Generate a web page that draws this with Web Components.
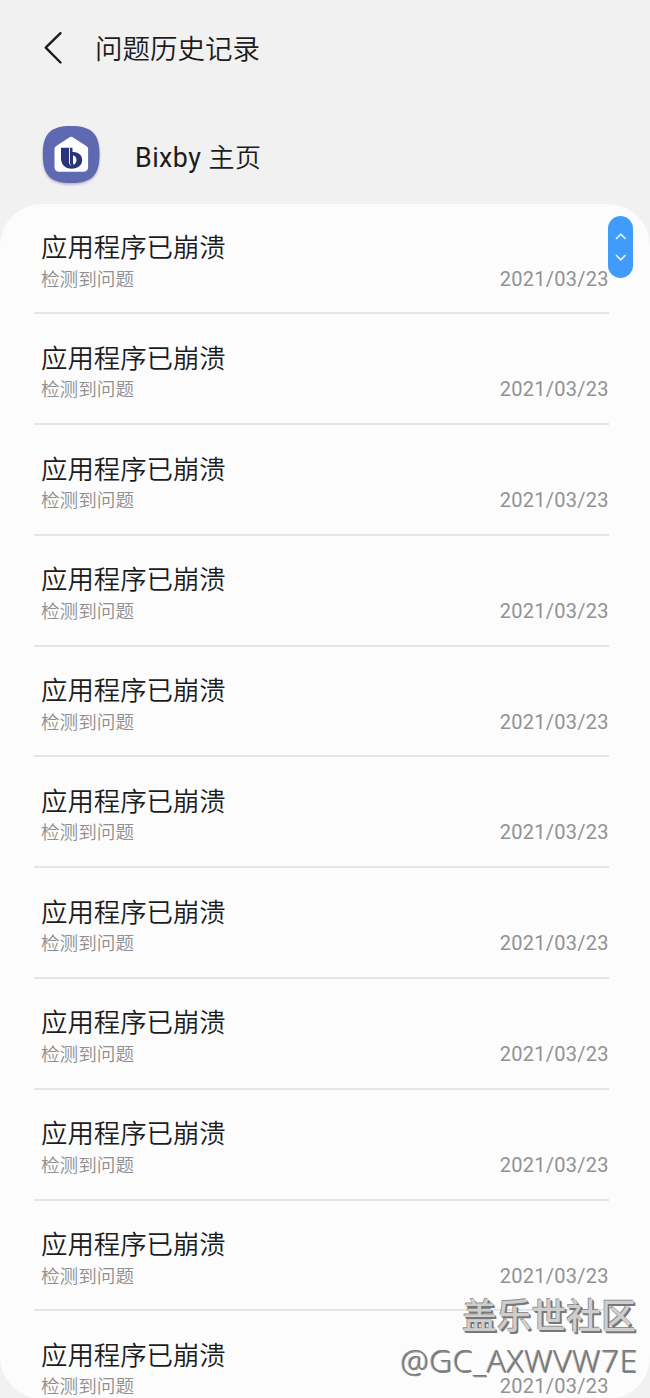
<!DOCTYPE html>
<html lang="zh-CN">
<head>
<meta charset="utf-8">
<title>问题历史记录</title>
<style>
html,body{margin:0;height:1398px;overflow:hidden;background:#f1f1f1}
body{font-family:"Noto Sans CJK SC",sans-serif;color:#1c1c1c}
</style>
</head>
<body>
<history-page></history-page>
<script>
const define = (name, html, setup) => customElements.define(name, class extends HTMLElement {
  constructor() {
    super();
    const t = document.createElement('template');
    t.innerHTML = html;
    this.attachShadow({mode: 'open'}).append(t.content.cloneNode(true));
    if (setup) setup(this.shadowRoot);
  }
});

define('page-header', `<style>
:host{display:flex;align-items:center;height:96px;padding-left:43px;box-sizing:border-box}
svg{width:20px;height:34px;flex:none;margin-right:32px}
h1{margin:0 0 2px;font-size:27.5px;line-height:40px;font-weight:350;white-space:nowrap}
</style>
<svg viewBox="0 0 20 34" fill="none" stroke="#1c1c1c" stroke-width="2.4" stroke-linecap="round" stroke-linejoin="round"><path d="M17.5 2.2 2.7 16.7l14.8 14.8"/></svg>
<h1><slot></slot></h1>`);

define('app-heading', `<style>
:host{display:flex;align-items:center;height:108px;padding:0 0 0 41px;box-sizing:border-box}
svg{width:62px;height:64px;flex:none;margin:12px 32px 0 0;align-self:center}
h2{margin:15px 0 0;font:400 26.8px/40px Roboto,"Noto Sans CJK SC",sans-serif;letter-spacing:.45px;white-space:nowrap}
.cjk{font-size:26px;font-weight:350}
</style>
<svg viewBox="0 0 62 64">
<defs><filter id="s" x="-10%" y="-10%" width="120%" height="125%"><feDropShadow dx="0" dy="1.5" stdDeviation="1" flood-color="#77799f" flood-opacity=".55"/></filter></defs>
<path filter="url(#s)" fill="#5f69b1" d="M30 2C9.500 2 1.800 9.500 1.800 30.500S9.500 59 30 59s28.500-7.500 28.500-28.500S50.500 2 30 2Z"/>
<path fill="#fff" d="M28.200 13.500a3.400 3.400 0 0 1 3.900 0l13.200 8.500c1.200.8 1.800 1.800 1.800 3.200v17.600q0 5-5 5H18.500q-5 0-5-5V25.200c0-1.400.6-2.400 1.800-3.200Z"/>
<path fill="#293578" d="M20 23.800H31.500V28C37.500 27.500 41.200 31.400 41.200 36c0 5-4.300 8.700-10.500 8.700C24 44.700 20 40.500 20 34.300Z"/>
<path fill="#fff" d="M28 23.500h.9v14.500c0 2 .7 3.200 2 4.200-1.900-.5-2.900-2.200-2.900-4.700ZM32 31.200c2.300.6 3.500 2.500 3.500 4.900 0 2.100-1 3.900-2.900 4.900-.4-1-.6-2-.6-3.400Z"/>
</svg><h2><slot></slot><span class="cjk"><slot name="kind"></slot></span></h2>`);

define('issue-row', `<style>
:host{display:block;height:110.78px;padding:0 41px 0 34px;box-sizing:border-box}
.box{height:100%;box-sizing:border-box;border-bottom:2px solid #e5e5e5;padding:23.400px 1px 0 7px}
.title{font-size:26.4px;line-height:38px;font-weight:350;white-space:nowrap}
.meta{display:flex;justify-content:space-between;align-items:center;height:26px;margin-top:-.4px;color:#8f8f8f;font-size:18.6px;line-height:26px;font-weight:350;white-space:nowrap}
.date{font-family:Roboto,sans-serif;font-size:20px;margin-top:2px;font-weight:400;letter-spacing:.27px;color:#929292;margin-right:-.9px}
</style>
<div class="box"><div class="title"><slot></slot></div>
<div class="meta"><span><slot name="detail"></slot></span><span class="date"><slot name="date"></slot></span></div></div>`);

define('scroll-handle', `<style>
:host{display:block;width:25px;height:62px;border-radius:13px;background:#409bfb}
svg{display:block}
</style><svg width="25" height="62" fill="none" stroke="#d9f5ff" stroke-width="1.7" stroke-linecap="round" stroke-linejoin="round"><path d="m8.500 22.500 4.300-4.300 4.300 4.300M8.500 39.500l4.300 4.300 4.300-4.300"/></svg>`);

define('community-mark', `<style>
:host{display:block;text-align:right;color:#cecece;white-space:nowrap;text-shadow:1px 1px 0 #777,1.800px 1.800px 0 #777,-.8px -.8px 0 #909090}
.name{font-size:34.800px;line-height:46px;font-weight:500}
.user{font-family:"Open Sans",sans-serif;font-size:31.800px;letter-spacing:.6px;margin-right:-2px;line-height:46px;font-weight:300;color:#777;text-shadow:-1px -.5px 0 #c4c4c4,.5px .5px 0 #888}
</style><div class="name"><slot></slot></div><div class="user"><slot name="user"></slot></div>`);

define('history-page', `<style>
:host{display:block;position:relative;width:650px;height:1398px;overflow:hidden;background:#f1f1f1}
.panel{height:1195px;margin-top:-.4px;overflow:hidden;border-radius:42px;background:#fcfcfc;box-sizing:border-box}
scroll-handle{position:absolute;left:608px;top:216px}
community-mark{position:absolute;right:14px;top:1291px}
</style>
<page-header>问题历史记录</page-header>
<app-heading>Bixby <span slot="kind">主页</span></app-heading>
<div class="panel"></div>
<scroll-handle></scroll-handle>
<community-mark>盖乐世社区<span slot="user">@GC_AXWVW7E</span></community-mark>`, root => {
  const panel = root.querySelector('.panel');
  for (let i = 0; i < 11; i++) {
    const row = document.createElement('issue-row');
    row.innerHTML = '应用程序已崩溃<span slot="detail">检测到问题</span><span slot="date">2021/03/23</span>';
    panel.append(row);
  }
});
</script>
</body>
</html>
